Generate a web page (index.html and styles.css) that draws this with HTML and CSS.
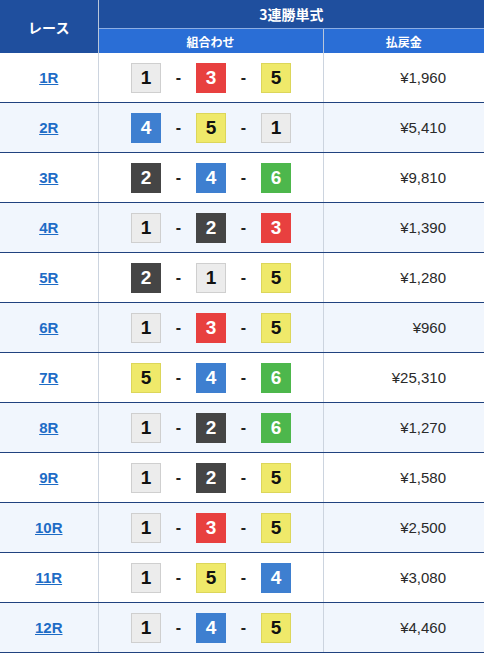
FILE: index.html
```html
<!DOCTYPE html>
<html lang="ja">
<head>
<meta charset="utf-8">
<link rel="stylesheet" href="styles.css">
</head>
<body>
<table class="res">
  <colgroup><col class="c-race"><col class="c-combo"><col class="c-pay"></colgroup>
  <thead>
    <tr class="h1">
      <th rowspan="2" class="h-race">レース</th>
      <th colspan="2" class="h-type">3連勝単式</th>
    </tr>
    <tr class="h2">
      <th class="h-sub">組合わせ</th>
      <th class="h-sub">払戻金</th>
    </tr>
  </thead>
  <tbody>
    <tr><td class="race"><a href="#">1R</a></td><td class="combo"><div class="cmb"><span class="b b1">1</span><span class="d">-</span><span class="b b3">3</span><span class="d">-</span><span class="b b5">5</span></div></td><td class="pay">¥1,960</td></tr>
    <tr class="alt"><td class="race"><a href="#">2R</a></td><td class="combo"><div class="cmb"><span class="b b4">4</span><span class="d">-</span><span class="b b5">5</span><span class="d">-</span><span class="b b1">1</span></div></td><td class="pay">¥5,410</td></tr>
    <tr><td class="race"><a href="#">3R</a></td><td class="combo"><div class="cmb"><span class="b b2">2</span><span class="d">-</span><span class="b b4">4</span><span class="d">-</span><span class="b b6">6</span></div></td><td class="pay">¥9,810</td></tr>
    <tr class="alt"><td class="race"><a href="#">4R</a></td><td class="combo"><div class="cmb"><span class="b b1">1</span><span class="d">-</span><span class="b b2">2</span><span class="d">-</span><span class="b b3">3</span></div></td><td class="pay">¥1,390</td></tr>
    <tr><td class="race"><a href="#">5R</a></td><td class="combo"><div class="cmb"><span class="b b2">2</span><span class="d">-</span><span class="b b1">1</span><span class="d">-</span><span class="b b5">5</span></div></td><td class="pay">¥1,280</td></tr>
    <tr class="alt"><td class="race"><a href="#">6R</a></td><td class="combo"><div class="cmb"><span class="b b1">1</span><span class="d">-</span><span class="b b3">3</span><span class="d">-</span><span class="b b5">5</span></div></td><td class="pay">¥960</td></tr>
    <tr><td class="race"><a href="#">7R</a></td><td class="combo"><div class="cmb"><span class="b b5">5</span><span class="d">-</span><span class="b b4">4</span><span class="d">-</span><span class="b b6">6</span></div></td><td class="pay">¥25,310</td></tr>
    <tr class="alt"><td class="race"><a href="#">8R</a></td><td class="combo"><div class="cmb"><span class="b b1">1</span><span class="d">-</span><span class="b b2">2</span><span class="d">-</span><span class="b b6">6</span></div></td><td class="pay">¥1,270</td></tr>
    <tr><td class="race"><a href="#">9R</a></td><td class="combo"><div class="cmb"><span class="b b1">1</span><span class="d">-</span><span class="b b2">2</span><span class="d">-</span><span class="b b5">5</span></div></td><td class="pay">¥1,580</td></tr>
    <tr class="alt"><td class="race"><a href="#">10R</a></td><td class="combo"><div class="cmb"><span class="b b1">1</span><span class="d">-</span><span class="b b3">3</span><span class="d">-</span><span class="b b5">5</span></div></td><td class="pay">¥2,500</td></tr>
    <tr><td class="race"><a href="#">11R</a></td><td class="combo"><div class="cmb"><span class="b b1">1</span><span class="d">-</span><span class="b b5">5</span><span class="d">-</span><span class="b b4">4</span></div></td><td class="pay">¥3,080</td></tr>
    <tr class="alt"><td class="race"><a href="#">12R</a></td><td class="combo"><div class="cmb"><span class="b b1">1</span><span class="d">-</span><span class="b b4">4</span><span class="d">-</span><span class="b b5">5</span></div></td><td class="pay">¥4,460</td></tr>
  </tbody>
</table>
</body>
</html>
```
FILE: styles.css
```css
html, body {
  margin: 0;
  padding: 0;
  background: #ffffff;
}
body {
  font-family: "Liberation Sans", "Noto Sans CJK JP", sans-serif;
  color: #222;
}
.res {
  width: 484px;
  border-collapse: collapse;
  table-layout: fixed;
}
.c-race { width: 98px; }
.c-combo { width: 225px; }
.c-pay { width: 161px; }
th {
  color: #fff;
  font-family: "Noto Sans CJK JP", sans-serif;
  font-weight: 700;
  font-size: 12px;
  padding: 0;
}
.h-race {
  background: #1f4f9e;
  border-right: 1px solid #b9c6da;
  height: 53px;
  font-size: 14px;
}
.h-type {
  background: #1f4f9e;
  height: 28px;
  font-size: 14px;
  border-bottom: 1px solid #8daee3;
}
.h2 th {
  background: #2a6ed6;
  height: 24px;
}
.h2 th + th {
  border-left: 1px solid #b9c6da;
}
td {
  height: 49px;
  padding: 0;
  border-bottom: 1px solid #20427f;
  background: #fff;
}
tr.alt td {
  background: #f1f6fd;
}
td + td {
  border-left: 1px solid #ccd4df;
}
.race {
  text-align: center;
}
.race a {
  color: #1e6cc6;
  font-weight: 700;
  font-size: 15px;
  text-decoration: underline;
}
.cmb {
  display: flex;
  justify-content: center;
  align-items: center;
  padding-left: 1px;
}
.b {
  width: 30px;
  height: 30px;
  box-sizing: border-box;
  display: flex;
  align-items: center;
  justify-content: center;
  font-weight: 700;
  font-size: 19px;
  color: #fff;
}
.d {
  width: 35px;
  text-align: center;
  font-size: 16px;
  font-weight: 700;
  color: #222;
}
.b1 { background: #ececec; border: 1px solid #cfcfcf; color: #111; }
.b2 { background: #454545; }
.b3 { background: #e8403f; }
.b4 { background: #3e7fd0; }
.b5 { background: #efe96a; border: 1px solid #dcd65a; color: #111; }
.b6 { background: #4db74c; }
.pay {
  text-align: right;
  padding-right: 38px;
  font-size: 15px;
  color: #2a2a2a;
}
```
